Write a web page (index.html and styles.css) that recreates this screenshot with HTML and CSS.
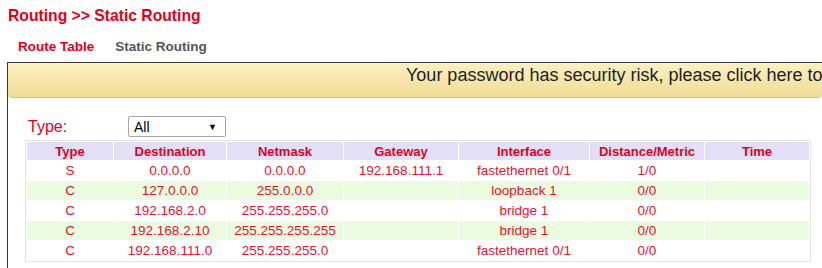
FILE: index.html
```html
<!DOCTYPE html>
<html>
<head>
<meta charset="utf-8">
<link rel="stylesheet" href="styles.css">
</head>
<body>
<h1 class="title">Routing &gt;&gt; Static Routing</h1>
<div class="tabs">
  <span class="tab active">Route Table</span>
  <span class="tab">Static Routing</span>
</div>
<div class="panel">
  <div class="banner"><span class="banner-text">Your password has security risk, please click here to change it.</span></div>
  <div class="filter">
    <span class="filter-label">Type:</span>
    <div class="select"><span>All</span><span class="arrow">&#9660;</span></div>
  </div>
  <table class="routes">
    <colgroup>
      <col class="c1"><col class="c2"><col class="c3"><col class="c4"><col class="c5"><col class="c6"><col class="c7">
    </colgroup>
    <thead>
      <tr><th>Type</th><th>Destination</th><th>Netmask</th><th>Gateway</th><th>Interface</th><th>Distance/Metric</th><th>Time</th></tr>
    </thead>
    <tbody>
      <tr><td>S</td><td>0.0.0.0</td><td>0.0.0.0</td><td>192.168.111.1</td><td>fastethernet 0/1</td><td>1/0</td><td></td></tr>
      <tr class="alt"><td>C</td><td>127.0.0.0</td><td>255.0.0.0</td><td></td><td>loopback 1</td><td>0/0</td><td></td></tr>
      <tr><td>C</td><td>192.168.2.0</td><td>255.255.255.0</td><td></td><td>bridge 1</td><td>0/0</td><td></td></tr>
      <tr class="alt"><td>C</td><td>192.168.2.10</td><td>255.255.255.255</td><td></td><td>bridge 1</td><td>0/0</td><td></td></tr>
      <tr><td>C</td><td>192.168.111.0</td><td>255.255.255.0</td><td></td><td>fastethernet 0/1</td><td>0/0</td><td></td></tr>
    </tbody>
  </table>
</div>
</body>
</html>
```
FILE: styles.css
```css
html, body {
  margin: 0;
  padding: 0;
  background: #fff;
  overflow: hidden;
}
body {
  font-family: "Liberation Sans", Arial, sans-serif;
  width: 822px;
  height: 268px;
}
.title {
  margin: 0;
  padding: 6px 0 0 8px;
  font-size: 15.7px;
  line-height: 20px;
  font-weight: bold;
  color: #e3001b;
}
.tabs {
  display: flex;
  gap: 21px;
  padding: 13px 0 0 18px;
  height: 23px;
  box-sizing: content-box;
}
.tab {
  font-size: 13.5px;
  font-weight: bold;
  line-height: 16px;
  color: #555;
}
.tab.active {
  color: #e3001b;
}
.panel {
  margin-left: 7px;
  border-top: 1px solid #3a3a3a;
  border-left: 1px solid #3a3a3a;
  height: 300px;
}
.banner {
  height: 34px;
  background: linear-gradient(#fcf0c3, #f0dc95);
  border-bottom: 1px solid #d8c17c;
  border-radius: 0 0 4px 4px;
  white-space: nowrap;
  overflow: hidden;
  padding-left: 398px;
}
.banner-text {
  font-size: 18px;
  line-height: 24px;
  color: #1f1f1f;
}
.filter {
  display: flex;
  align-items: center;
  padding: 18px 0 0 20px;
  height: 21px;
}
.filter-label {
  width: 100px;
  font-size: 16px;
  color: #e3001b;
}
.select {
  width: 98px;
  height: 21px;
  box-sizing: border-box;
  border: 1px solid #a6a6a6;
  border-radius: 2px;
  display: flex;
  align-items: center;
  justify-content: space-between;
  padding: 0 8px 0 5px;
  font-size: 14px;
  color: #000;
}
.arrow {
  font-size: 9px;
}
.routes {
  margin: 3px 0 0 17px;
  width: 786px;
  border: 1px solid #e3e3e3;
  border-collapse: separate;
  border-spacing: 1px;
  table-layout: fixed;
  font-size: 13.5px;
  color: #e3142f;
}
.c1 { width: 86px; }
.c2 { width: 112px; }
.c3 { width: 116px; }
.c4 { width: 114px; }
.c5 { width: 130px; }
.c6 { width: 114px; }
.c7 { width: auto; }
.routes th {
  background: #e2dff6;
  font-weight: bold;
  font-size: 13px;
  height: 18px;
  padding: 0;
  text-align: center;
  color: #e0001f;
}
.routes td {
  height: 19px;
  padding: 0;
  text-align: center;
  background: #fff;
}
.routes tr.alt td {
  background: #eafbdf;
}
```
